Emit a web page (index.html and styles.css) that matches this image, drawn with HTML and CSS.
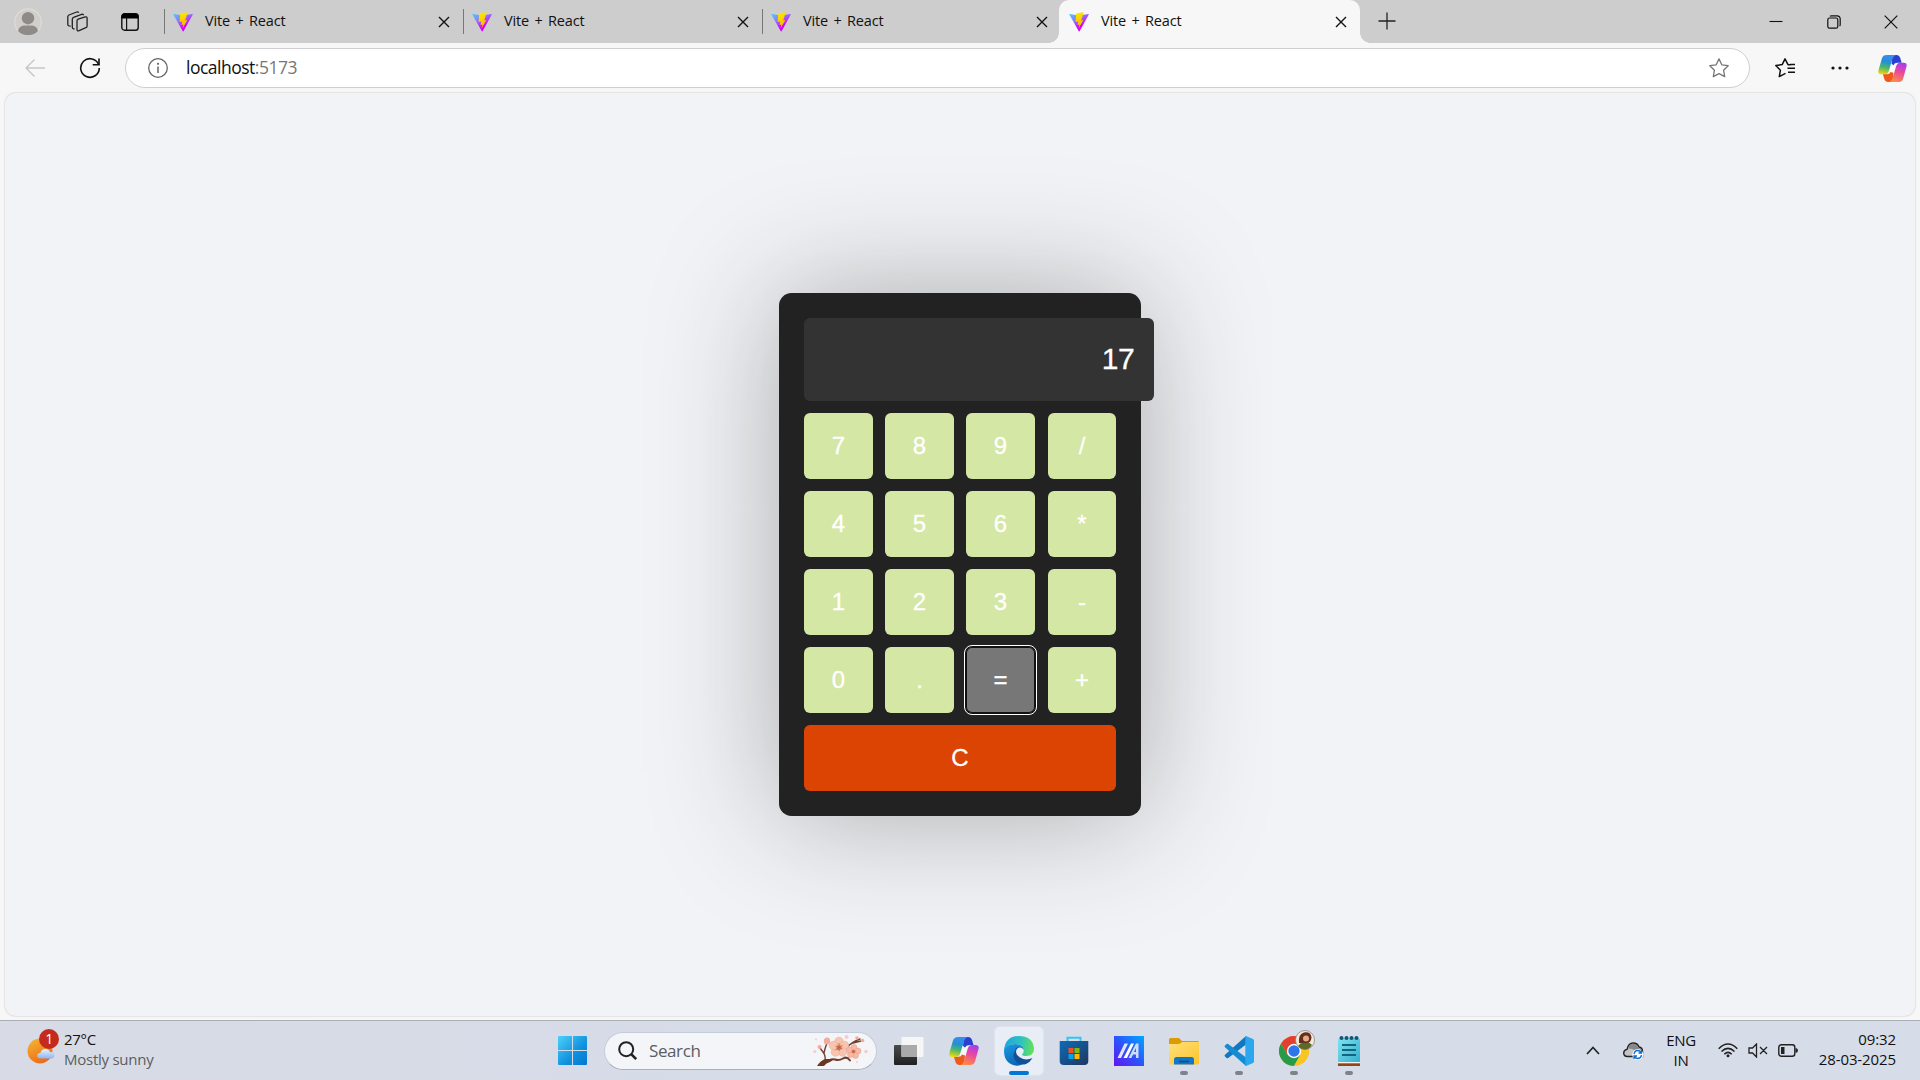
FILE: index.html
```html
<!DOCTYPE html>
<html lang="en">
<head>
<meta charset="utf-8">
<title>Vite + React</title>
<link rel="stylesheet" href="styles.css">
</head>
<body>
<svg class="defs" width="0" height="0">
  <defs>
    <linearGradient id="vite-body" x1="0" y1="0" x2=".5" y2=".75"><stop offset="0" stop-color="#41d1ff"/><stop offset=".5" stop-color="#8f7cf8"/><stop offset="1" stop-color="#d400ff"/></linearGradient>
    <linearGradient id="vite-bolt" x1=".4" y1="0" x2=".55" y2="1"><stop offset="0" stop-color="#fbe900"/><stop offset="1" stop-color="#ffb000"/></linearGradient>
    <linearGradient id="cop-left" x1=".5" y1="0" x2=".3" y2="1"><stop offset="0" stop-color="#3b8cf0"/><stop offset=".35" stop-color="#238fd5"/><stop offset=".65" stop-color="#4bb86b"/><stop offset="1" stop-color="#f2d80a"/></linearGradient>
    <linearGradient id="cop-right" x1=".7" y1="0" x2=".4" y2="1"><stop offset="0" stop-color="#a63df0"/><stop offset=".45" stop-color="#e8489f"/><stop offset="1" stop-color="#ff8a4a"/></linearGradient>
    <linearGradient id="win" x1="0" y1="0" x2="1" y2="1"><stop offset="0" stop-color="#4cd0fb"/><stop offset=".6" stop-color="#1091dd"/><stop offset="1" stop-color="#0376d2"/></linearGradient>
    <linearGradient id="edge-top" x1="0" y1=".4" x2="1" y2=".5"><stop offset="0" stop-color="#1fa5dc"/><stop offset=".55" stop-color="#2fc2c0"/><stop offset="1" stop-color="#66e254"/></linearGradient>
    <linearGradient id="edge-left" x1="0" y1="0" x2=".4" y2="1"><stop offset="0" stop-color="#1a9ce2"/><stop offset="1" stop-color="#0a66b8"/></linearGradient>
    <linearGradient id="store" x1="0" y1="0" x2="1" y2="1"><stop offset="0" stop-color="#0d6cb8"/><stop offset="1" stop-color="#20365f"/></linearGradient>
    <linearGradient id="asus" x1="1" y1="0" x2="0" y2="1"><stop offset="0" stop-color="#00a8ff"/><stop offset=".5" stop-color="#2c55fb"/><stop offset="1" stop-color="#6414ee"/></linearGradient>
    <linearGradient id="folder" x1="0" y1="0" x2="1" y2="1"><stop offset="0" stop-color="#ffe07a"/><stop offset="1" stop-color="#fdc42b"/></linearGradient>
    <linearGradient id="pad" x1="0" y1="0" x2="1" y2="1"><stop offset="0" stop-color="#7fe3f2"/><stop offset="1" stop-color="#36aecd"/></linearGradient>
    <linearGradient id="sun" x1="0" y1="0" x2=".5" y2="1"><stop offset="0" stop-color="#f5b936"/><stop offset="1" stop-color="#ee6c16"/></linearGradient>
    <linearGradient id="cloud" x1="0" y1="0" x2="0" y2="1"><stop offset="0" stop-color="#e8f2ff"/><stop offset="1" stop-color="#8db5f1"/></linearGradient>
    <linearGradient id="dark" x1="0" y1="0" x2="0" y2="1"><stop offset="0" stop-color="#4b4b4b"/><stop offset="1" stop-color="#202020"/></linearGradient>
  </defs>
  <symbol id="i-vite" viewBox="0 0 20 20">
    <path d="M.3 2.400 9.800 19.300q.4.600.8 0L19.800 2.400q.2-.6-.5-.5L10 3.500.9 1.900Q0 1.800.3 2.400z" fill="url(#vite-body)"/>
    <path d="M14.800 0 7.200 1.400l-.6 8.600 2.600-.6-.7 3.500 1.900-.5-.9 4 4.900-8.500-2.200.5z" fill="url(#vite-bolt)"/>
  </symbol>
  <symbol id="i-close" viewBox="0 0 12 12"><path d="M1 1l10 10M11 1 1 11" stroke="#111" stroke-width="1.400" fill="none"/></symbol>
  <symbol id="i-copilot" viewBox="0 0 30 28">
    <path d="M13 9h6.500l-3 10H10z" fill="#fff" fill-opacity=".75"/>
    <path d="M15 0h4q3 0 4 3l1.500 5H20q-3 0-4 2.500L14 9z" fill="#2b3fd0"/>
    <path d="M9 0h9.500Q16 1 15 4l-3.800 12.500Q10 20 7 20H3.500Q-.5 20 .4 16L4 3.500Q5 0 9 0z" fill="url(#cop-left)"/>
    <path d="M15 28H10.500Q7.500 28 6.500 25L5 20H9q3 0 4-2.500l3 1z" fill="#f05a18"/>
    <path d="M21 28h-9.500q2.500-1 3.500-4l3.800-12.500Q20 8 23 8h3.500q4 0 3 4L26 24.500Q25 28 21 28z" fill="url(#cop-right)"/>
  </symbol>
</svg>

<header class="tabstrip">
  <div class="tools">
    <svg width="28" height="28" viewBox="0 0 28 28"><circle cx="14" cy="14" r="13.200" fill="#d0cfcb" stroke="#dedcd6" stroke-width="1.200"/><circle cx="14" cy="10.200" r="6.200" fill="#8f8b88"/><path d="M4 23q1-5.500 7-5.500h6q6 0 7 5.500-4 4.300-10 4.300T4 23z" fill="#8f8b88"/></svg>
    <svg width="22" height="22" viewBox="0 0 22 22" fill="none" stroke="#222" stroke-width="1.300"><path d="M10 10q0-1.300 1.200-1.800l7-2.300q1.900-.5 1.900 1.400v7.600q0 1.300-1.200 1.800l-6.800 3Q10 20.500 10 18.600z"/><path d="M7.600 17.800q-2.300.2-2.300-1.800V8.300q0-1.400 1.300-1.900l8-3q1.600-.5 2 .8M3.700 15.200Q.8 15.400.8 13.300V5.800q0-1.300 1.200-1.800l7.700-3q1.400-.4 2 .8"/></svg>
    <svg width="18" height="18" viewBox="0 0 18 18"><rect x=".8" y=".8" width="16.400" height="16.400" rx="2.800" fill="none" stroke="#111" stroke-width="1.400"/><path d="M.5 5.500V3Q.5.500 3 .500h12q2.500 0 2.500 2.500v2.500z" fill="#000"/><path d="M5.600 5v12" stroke="#111" stroke-width="1.200"/></svg>
  </div>
  <div class="tab"><svg class="fav"><use href="#i-vite"/></svg><span>Vite + React</span><svg class="x"><use href="#i-close"/></svg></div>
  <div class="tab"><svg class="fav"><use href="#i-vite"/></svg><span>Vite + React</span><svg class="x"><use href="#i-close"/></svg></div>
  <div class="tab before-active"><svg class="fav"><use href="#i-vite"/></svg><span>Vite + React</span><svg class="x"><use href="#i-close"/></svg></div>
  <div class="tab active"><svg class="fav"><use href="#i-vite"/></svg><span>Vite + React</span><svg class="x"><use href="#i-close"/></svg></div>
  <div class="strip-rest">
    <svg class="new-tab" width="18" height="18" viewBox="0 0 18 18"><path d="M9 .5v17M.5 9h17" stroke="#222" stroke-width="1.300"/></svg>
    <div class="window-controls">
      <svg width="14" height="14" viewBox="0 0 14 14"><path d="M.5 6.500h13" stroke="#111" stroke-width="1.100"/></svg>
      <svg width="14" height="14" viewBox="0 0 14 14" fill="none" stroke="#111" stroke-width="1.200"><rect x=".8" y="3" width="10" height="10.200" rx="1.800"/><path d="M3 1.400Q3.500.8 4.500.8H10q3.200 0 3.200 3.200v5.500q0 1-.6 1.500"/></svg>
      <svg width="14" height="14" viewBox="0 0 14 14"><path d="M.7.700l12.600 12.600M13.300.700.700 13.300" stroke="#111" stroke-width="1.200"/></svg>
    </div>
  </div>
</header>

<nav class="toolbar">
  <svg class="back" width="20" height="18" viewBox="0 0 20 18" fill="none" stroke="#c6c6c6" stroke-width="1.400"><path d="M20 9H1M9.500.500 1 9l8.500 8.500"/></svg>
  <svg class="reload" width="22" height="22" viewBox="0 0 22 22" fill="none" stroke="#111" stroke-width="1.600"><path d="M19.700 7.700A9.300 9.300 0 1 0 20.300 11"/><path d="M20 1.500v6.300h-6.300"/></svg>
  <div class="address">
    <svg width="20" height="20" viewBox="0 0 20 20"><circle cx="10" cy="10" r="9.300" fill="none" stroke="#666" stroke-width="1.300"/><path d="M10 8.500V15" stroke="#666" stroke-width="1.500"/><circle cx="10" cy="5.800" r="1.100" fill="#666"/></svg>
    <span class="url">localhost<span class="port">:5173</span></span>
    <svg width="20" height="20" viewBox="0 0 20 20"><path d="M10 .9l2.800 5.900 6.400.9-4.600 4.600 1.100 6.400L10 15.700l-5.700 3 1.100-6.400L.8 7.700l6.400-.9z" fill="none" stroke="#777" stroke-width="1.300" stroke-linejoin="round"/></svg>
  </div>
  <svg class="favorites" width="21" height="20" viewBox="0 0 21 20" fill="none" stroke="#111" stroke-width="1.500" stroke-linejoin="round"><path d="M16 6.700h-3L10 .9 7.200 6.600.8 7.600l4.600 4.700-1.100 6.300 6.200-3.200M12.500 10.300H20M13 14.300h7M15 6.500h5"/></svg>
  <svg class="more" width="18" height="4" viewBox="0 0 18 4" fill="#111"><circle cx="2" cy="2" r="1.600"/><circle cx="9" cy="2" r="1.600"/><circle cx="16" cy="2" r="1.600"/></svg>
  <svg class="copilot" width="29" height="27"><use href="#i-copilot"/></svg>
</nav>

<main class="page">
  <section class="calculator">
    <div class="display">17</div>
    <div class="keys">
      <button>7</button><button>8</button><button>9</button><button>/</button>
      <button>4</button><button>5</button><button>6</button><button>*</button>
      <button>1</button><button>2</button><button>3</button><button>-</button>
      <button>0</button><button>.</button><button class="equals">=</button><button>+</button>
      <button class="clear">C</button>
    </div>
  </section>
</main>

<footer class="taskbar">
  <div class="weather">
    <div class="weather-icon">
      <svg width="32" height="36" viewBox="0 0 32 36"><circle cx="13" cy="22" r="12.500" fill="url(#sun)"/><path d="M13.500 29.500q-3.200 0-3.200-2.700 0-2.500 3-2.700Q14.500 20 18.500 20q3.500 0 4.500 3 4.500-.2 4.500 3.200 0 3.300-3.500 3.300z" fill="url(#cloud)"/></svg>
      <span class="badge">1</span>
    </div>
    <div class="weather-text"><span class="degrees">27°C</span><span class="muted">Mostly sunny</span></div>
  </div>

  <svg class="start" width="29" height="29" viewBox="0 0 29 29"><path d="M1 0h13v14H0V1q0-1 1-1zM15 0h13q1 0 1 1v13H15zM0 15h14v14H1q-1 0-1-1zM15 15h14v13q0 1-1 1H15z" fill="url(#win)"/></svg>
  <div class="search">
    <svg width="20" height="20" viewBox="0 0 20 20" fill="none" stroke="#222"><circle cx="8.200" cy="8.200" r="7" stroke-width="2"/><path d="M13.200 13.200l5 5" stroke-width="2.600"/></svg>
    <span>Search</span>
    <svg width="56" height="34" viewBox="0 0 56 34">
      <g fill="none" stroke="#74402d" stroke-linecap="round"><path d="M10 30q8-6 12-4.500t8-1 7 2" stroke-width="2"/><path d="M12 28q1-6-2-10l-3-4M11 19q1-5 3-10M34 13q7-6 13-8M40 9l8-2" stroke-width="1.400"/></g>
      <path d="M4 32q3-5 8-7l7 0q2 1-2 3-4 1-6 4z" fill="#6d3524"/>
      <g fill="#f9c4ad" stroke="#e39a86" stroke-width=".4"><circle cx="26" cy="7.500" r="4.300"/><circle cx="31.500" cy="11.500" r="4.300"/><circle cx="29.500" cy="18" r="4.300"/><circle cx="22.500" cy="18" r="4.300"/><circle cx="20.500" cy="11.500" r="4.300"/></g>
      <circle cx="26" cy="13.500" r="2.600" fill="#d98468"/><path d="M26 9v8M22.500 12l7 3M22.500 16l7-4.500" stroke="#b9553c" stroke-width=".7"/>
      <g fill="#f8b9a4" stroke="#e08e7c" stroke-width=".4"><circle cx="41" cy="13.500" r="3"/><circle cx="45" cy="17" r="3"/><circle cx="42.500" cy="21.500" r="3"/><circle cx="37.500" cy="20.500" r="3"/><circle cx="36.500" cy="16" r="3"/></g>
      <circle cx="40.500" cy="17.500" r="1.800" fill="#cc6a50"/>
      <g fill="#f4ab9b"><ellipse cx="14" cy="7" rx="3.200" ry="3.500"/><circle cx="6.500" cy="13" r="2"/><circle cx="44" cy="4" r="1.800"/><circle cx="49.500" cy="6.500" r="1.800"/></g>
      <g fill="#f6ccca"><circle cx="1.800" cy="17.500" r="1.500"/><circle cx="33.500" cy="3" r="2"/><circle cx="53" cy="17.500" r="1.800"/><circle cx="44" cy="28" r="1"/><circle cx="3" cy="5.500" r="1"/></g>
    </svg>
  </div>
  <div class="apps">
    <div class="app"><svg width="30" height="30" viewBox="0 0 30 30"><rect x="0" y="9" width="23" height="20" rx="1" fill="url(#dark)"/><rect x="7.500" y="1" width="22" height="20" rx="1" fill="#f6f6f6"/><path d="M7.500 9H23v12H7.500z" fill="#aaa"/></svg></div>
    <div class="app"><svg width="30" height="28"><use href="#i-copilot"/></svg></div>
    <div class="app current"><svg width="30" height="30" viewBox="0 0 30 30">
      <path d="M0 14.500Q1 8 11 8q9 0 9.500 7-1.500-3.500-5-3.500-4 0-4.500 5.500 0 9 9 10-3 3-7 2.800Q0 28.500 0 14.500z" fill="url(#edge-left)"/>
      <path d="M11 15q-3 4 0 9 4 6 11 4 4-1.700 6.500-6-5 2.500-10 .8Q12 20 12 15.500 12.500 11.500 16 11.500 11.500 10.500 11 15z" fill="#124f96"/>
      <path d="M0 14.500Q1 0 15 0q13.500.2 15 12 .5 7.500-7.500 8-4 0-4.500-1.500 2-2.200 1.800-4.500Q19 8 11.500 8 3 8 0 14.500z" fill="url(#edge-top)"/>
    </svg></div>
    <div class="app"><svg width="30" height="30" viewBox="0 0 30 30"><path d="M8.500 6V1.700H21.500V6" fill="none" stroke="#35c3f3" stroke-width="2"/><path d="M.7 5h28.600v20q0 4-4 4H4.700q-4 0-4-4z" fill="url(#store)"/><path d="M9.500 12h5v5h-5z" fill="#f25022"/><path d="M15.500 12h5v5h-5z" fill="#7fba00"/><path d="M9.500 18h5v5h-5z" fill="#00a4ef"/><path d="M15.500 18h5v5h-5z" fill="#ffb900"/></svg></div>
    <div class="app"><svg width="30" height="30" viewBox="0 0 30 30"><path d="M0 0h30v30H0z" fill="url(#asus)"/><path d="M10.500 7.500H14L7 22H3.500z" fill="#dfe6ff"/><path d="M17 7.500h3L13 22H9.500z" fill="#fff"/><path d="M14.500 22 22 7.500h2.500V22H22v-3.500h-3L17.300 22zM20 16h2v-4z" fill="#cfdcff"/></svg></div>
    <div class="app running"><svg width="30" height="30" viewBox="0 0 30 30"><path d="M0 3.500Q0 2 1.500 2H10l3 3h16q1 0 1 1.500V12H0z" fill="#dc9a07"/><path d="M0 8h10l3.500-2H30v21q0 1.500-1.500 1.500h-27Q0 28.500 0 27z" fill="url(#folder)"/><path d="M5 28.500v-5q0-2.500 2.500-2.500h15q2.500 0 2.500 2.500v5z" fill="#1476c6"/><path d="M10 25.500h10" stroke="#0a4b91" stroke-width="1.500"/></svg></div>
    <div class="app running"><svg width="30" height="30" viewBox="0 0 30 30"><path d="M22 0 1 18.800q-1 .8 0 1.700l1.600 1.400q.8.600 1.600 0L22 8.500z" fill="#0f78c0"/><path d="M22 30 1 11.200q-1-.8 0-1.700l1.600-1.400q.8-.600 1.600 0L22 21.500z" fill="#158bd2"/><path d="M22 0l7 3q1 .6 1 1.700v20.600q0 1.100-1 1.700l-7 3q-.7 0-.7-1V1q0-1 .7-1z" fill="#2ba7ef"/></svg></div>
    <div class="app running chrome"><svg width="30" height="30" viewBox="0 0 30 30"><circle cx="15" cy="15" r="15" fill="#f9c524"/><path d="M15 15H30A15 15 0 0 0 2 7.500L8.500 18.700z" fill="#e33f31"/><path d="M2 7.500A15 15 0 0 0 15 30l6.500-11.300-13 0z" fill="#29994a"/><path d="M15 8h13.300A15 15 0 0 1 15 30l6.300-11.200z" fill="#f9c524"/><circle cx="15" cy="15" r="7.200" fill="#fff"/><circle cx="15" cy="15" r="5.700" fill="#2e75e9"/></svg>
      <svg class="avatar" width="20" height="20" viewBox="0 0 20 20"><circle cx="10" cy="10" r="9.500" fill="#f3ead8" stroke="#888" stroke-width=".8"/><path d="M4 13Q3 4 9 2.500q7-1 7.500 5Q16 12 12 14z" fill="#63301f"/><circle cx="11" cy="8.500" r="3" fill="#e6aa84"/><path d="M3 16q3-4 7-3 5-1 7 2-3 4.500-7 4.500T3 16z" fill="#5d6927"/></svg></div>
    <div class="app running"><svg width="22" height="30" viewBox="0 0 22 30"><path d="M0 27h22v3H0z" fill="#954512"/><path d="M0 25h22v2.300H0z" fill="#f4f2ee"/><path d="M0 4q0-2 2-2h18q2 0 2 2v22H0z" fill="url(#pad)"/><g fill="#14566f"><circle cx="3.500" cy="2" r="2"/><circle cx="8.500" cy="2" r="2"/><circle cx="13.500" cy="2" r="2"/><circle cx="18.500" cy="2" r="2"/></g><path d="M4 9h14M4 14h14M4 19h14" stroke="#12647f" stroke-width="1.800"/></svg></div>
  </div>

  <div class="tray">
    <svg width="14" height="9" viewBox="0 0 14 9"><path d="M1 8l6-6.500L13 8" fill="none" stroke="#222" stroke-width="1.700"/></svg>
    <svg class="sync" width="21" height="18" viewBox="0 0 21 18"><path d="M4.500 14.500Q.7 14.500.7 11q0-3 3.300-3.600Q5.500 1 10 1q4.500 0 6 4 3.500.5 3.500 4.500v5z" fill="#c4c4c4" stroke="#222" stroke-width="1.400"/><path d="M5 6.500Q6.500 1.700 10 1.700q4 0 5.500 4l3.200 2v3L9 7z" fill="#888"/><circle cx="14.800" cy="12.500" r="5.500" fill="#fff"/><path d="M11 12q.7-3.500 3.800-3.500 2 0 3.500 2M18.500 13q-.7 3.500-3.800 3.500-2 0-3.500-2M18.500 8v3h-3M11 17v-3h3" fill="none" stroke="#0c6fd0" stroke-width="1.300"/></svg>
    <div class="lang"><span>ENG</span><span>IN</span></div>
    <svg class="wifi" width="20" height="15" viewBox="0 0 20 15" fill="none" stroke="#222" stroke-width="1.500"><path d="M.7 5.700Q10-3.700 19.300 5.700M3.500 8.500q6.500-6.300 13 0M6.300 11.200q3.700-3.600 7.400 0"/><circle cx="10" cy="12.800" r="1.500" fill="#222" stroke="none"/></svg>
    <svg class="speaker" width="20" height="15" viewBox="0 0 20 15" fill="none" stroke="#222" stroke-width="1.300"><path d="M1 5h3.500l4-4v13l-4-4H1zM12 4l7 7M19 4l-7 7"/></svg>
    <svg class="battery" width="20" height="13" viewBox="0 0 20 13"><rect x=".8" y=".8" width="16" height="11.400" rx="2.500" fill="none" stroke="#222" stroke-width="1.400"/><path d="M3 3h3.500v7H3zM17.500 4q2.500.3 2.500 2.500T17.500 9z" fill="#222"/></svg>
    <div class="clock"><span>09:32</span><span>28-03-2025</span></div>
  </div>
</footer>
</body>
</html>
```
FILE: styles.css
```css
* { box-sizing: border-box; }
body {
  margin: 0;
  width: 1920px;
  height: 1080px;
  overflow: hidden;
  display: flex;
  flex-direction: column;
  background: #f7f7f7;
  font-family: "Open Sans", "Noto Sans", sans-serif;
  color: #111;
}
svg { display: block; flex: none; }
.defs { position: absolute; }

/* Tab strip */
.tabstrip { display: flex; height: 43px; flex: none; background: #cdcdcd; }
.tools { width: 164px; padding-left: 14px; display: flex; align-items: center; }
.tools svg:nth-child(2) { margin-left: 25px; }
.tools svg:nth-child(3) { margin-left: 32px; }
.tab {
  position: relative;
  width: 299px;
  padding: 0 13px 0 9px;
  display: flex;
  align-items: center;
  font-size: 14.500px;
}
.tab::before {
  content: "";
  width: 1px;
  height: 25px;
  position: absolute;
  left: 0;
  top: 9px;
  background: #777;
}
.tab span { margin-left: 12px; flex: 1; letter-spacing: -.15px; word-spacing: 1.800px; padding-bottom: 3px; }
.fav { width: 20px; height: 20px; }
.x { width: 12px; height: 12px; }
.before-active { width: 297px; padding-right: 11px; border-bottom-right-radius: 10px; }
.active { width: 301px; background: #f7f7f7; border-radius: 10px 10px 0 0; padding: 0 13px 0 10px; }
.active::before, .active::after {
  content: "";
  position: absolute;
  top: auto;
  bottom: 0;
  left: -10px;
  width: 10px;
  height: 10px;
  background: radial-gradient(circle at 0 0, transparent 9.500px, #f7f7f7 10px);
}
.active::after { left: auto; right: -10px; background: radial-gradient(circle at 100% 0, transparent 9.500px, #f7f7f7 10px); }
.strip-rest { flex: 1; display: flex; align-items: center; justify-content: space-between; padding: 0 22px 0 18px; }
.new-tab { margin-bottom: 2px; }
.window-controls { display: flex; gap: 43.500px; }

/* Navigation toolbar */
.toolbar { height: 50px; flex: none; display: flex; align-items: center; padding: 0 13px 0 25px; }
.reload { margin-left: 34px; }
.address {
  margin-left: 24px;
  width: 1625px;
  height: 40px;
  border: 1px solid #cfcfcf;
  border-radius: 20px;
  background: #fff;
  display: flex;
  align-items: center;
  padding: 0 20px 0 22px;
}
.url { margin-left: 18px; flex: 1; font-size: 17.500px; letter-spacing: -.5px; padding-bottom: 3px; }
.port { color: #777; }
.favorites { margin-left: 25px; }
.more { margin-left: 35px; }
.copilot { margin-left: auto; }

/* Page and calculator */
.page {
  height: 923px;
  flex: none;
  margin: 0 5px;
  border-radius: 11px;
  background: #f2f3f7;
  box-shadow: 0 0 2px rgba(0, 0, 0, .25);
  display: flex;
  align-items: center;
  justify-content: center;
  overflow: hidden;
}
.calculator {
  width: 362px;
  height: 523px;
  padding: 25px;
  border-radius: 12.500px;
  background: #222;
  box-shadow: 0 0 125px #aaa;
  font-family: "Liberation Sans", Arial, sans-serif;
  -webkit-text-stroke: .3px #fff;
}
.display {
  width: 350px;
  height: 83px;
  padding-right: 20px;
  border-radius: 6px;
  background: #333;
  color: #fff;
  font-size: 30px;
  line-height: 81px;
  letter-spacing: -.6px;
  text-align: right;
}
.keys { margin-top: 12px; display: grid; grid-template-columns: 81px 81px 82px 68px; grid-auto-rows: 66px; row-gap: 12px; }
.keys button {
  width: 69px;
  border: 0;
  padding: 0;
  border-radius: 6px;
  background: #d4e7a5;
  color: #fff;
  font: 24px "Liberation Sans", Arial, sans-serif;
}
.keys button:nth-child(4n) { width: 68px; }
.keys .equals { background: #777; outline: 1px solid #fff; outline-offset: 1px; box-shadow: inset 0 0 0 1px #111, 0 0 0 1px #111; }
.keys .clear { grid-column: 1 / -1; width: 100%; background: #db4402; }

/* Taskbar */
.taskbar {
  margin-top: 4px;
  height: 60px;
  flex: none;
  display: flex;
  align-items: center;
  border-top: 1px solid #abaeb5;
  background: linear-gradient(90deg, #d8dbe5, #d6dce8 40%, #d6dde9);
  font-size: 15px;
  letter-spacing: -.3px;
}
.weather { width: 558px; padding-left: 27px; display: flex; align-items: center; }
.weather-icon { position: relative; margin-top: -8px; }
.badge {
  position: absolute;
  left: 12px;
  top: 0;
  width: 20px;
  height: 20px;
  border-radius: 50%;
  background: #c42b1c;
  color: #fff;
  font-size: 14px;
  line-height: 20px;
  text-align: center;
}
.weather-text, .lang, .clock { display: flex; flex-direction: column; line-height: 20px; padding-bottom: 4px; }
.lang { padding-bottom: 2px; }
.weather-text { margin-left: 5px; }
.muted { color: #5b5d62; letter-spacing: -.25px; }
.search {
  margin-left: 17px;
  width: 273px;
  height: 38px;
  border-radius: 19px;
  border: 1px solid #c5cbd8;
  border-bottom-color: #a8afbd;
  background: #f3f5f9;
  display: flex;
  align-items: center;
  padding: 0 7px 0 13px;
}
.search span { margin-left: 11px; flex: 1; font-size: 17px; color: #5b5d62; letter-spacing: -.4px; padding-bottom: 1px; }
.apps { margin-left: 8px; display: flex; gap: 7px; }
.app { position: relative; width: 48px; height: 48px; display: flex; align-items: center; justify-content: center; border-radius: 5px; }
.current { background: #e9edf5; box-shadow: 0 0 1px 1px #dfe4ed; }
.current::after, .running::after {
  content: "";
  position: absolute;
  bottom: 0;
  left: 20px;
  width: 8px;
  height: 4px;
  border-radius: 2px;
  background: #808287;
}
.current::after { left: 14px; width: 20px; background: #0078d4; }
.avatar { position: absolute; left: 25px; top: 3px; }
.tray { margin-left: auto; display: flex; align-items: center; padding-right: 24px; }
.sync { margin-left: 23px; }
.lang { margin-left: 16px; margin-right: 1px; width: 42px; text-align: center; }
.wifi { margin-left: 15px; }
.speaker, .battery { margin-left: 10px; }
.clock { width: 98px; text-align: right; letter-spacing: -.1px; }
```
